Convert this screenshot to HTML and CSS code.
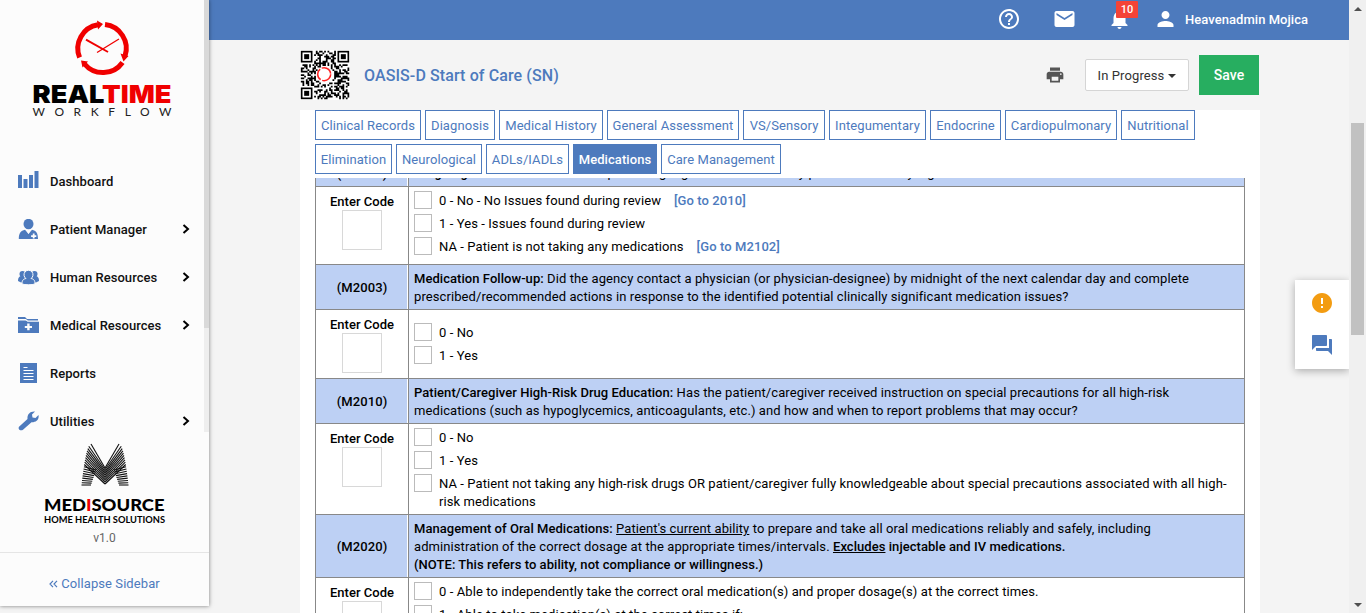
FILE: index.html
```html
<!DOCTYPE html>
<html lang="en">
<head>
<meta charset="utf-8">
<title>OASIS-D Start of Care (SN)</title>
<link rel="stylesheet" href="styles.css">
</head>
<body>
<div class="app">
  <aside class="sidebar">
    <svg class="brand" width="205" height="130" viewBox="0 0 205 130">
      <g fill="none" stroke="#f00000" stroke-width="5">
        <path d="M79.600 57.500A24 24 0 0 1 98 24.800"/>
        <path d="M105 24.500A24 24 0 0 1 125 56"/>
        <path d="M122.500 62.500A24 24 0 0 1 84.500 64"/>
      </g>
      <path fill="#f00000" d="M97 20.500l6 3.500-5 5.500zM120.500 53.500l8 2.500-5 5.500zM81 60.500l7 1-5.500 6z"/>
      <path stroke="#f00000" stroke-width="2" d="M86 39.700l22 12.300"/>
      <path stroke="#f00000" stroke-width="1.300" d="M119 39L97 52.500"/>
      <text class="brand-name" x="32.500" y="103.400" textLength="139" lengthAdjust="spacingAndGlyphs">REAL<tspan fill="#f00000">TIME</tspan></text>
      <text class="brand-sub" x="32.500" y="116" textLength="139">WORKFLOW</text>
    </svg>
    <nav class="menu">
      <a class="item"><svg width="21" height="20" viewBox="0 0 21 20"><path d="M0 4h4v13H0zM5.500 8h4v9h-4zM11 4h4v13h-4zM16.500 0h4v17h-4z"/></svg><span>Dashboard</span></a>
      <a class="item"><svg width="21" height="20" viewBox="0 0 21 20"><ellipse cx="10.500" cy="5" rx="5" ry="5.200"/><path d="M.8 20c0-6 2-8.500 6.200-9.300l3.500 4.300 3.500-4.300c4.200.8 6 3.300 6 9.300z"/><path fill="#fcfcfc" d="M8.500 11l2 4 2-4zM14.800 14.500h1.800v1.700h1.700v1.700h-1.700v1.700h-1.800v-1.700h-1.700v-1.700h1.700z"/></svg><span>Patient Manager</span><i class="chev"><svg width="8" height="10" viewBox="0 0 8 10"><path d="M1.500 1l4.500 4-4.500 4"/></svg></i></a>
      <a class="item"><svg width="21" height="20" viewBox="0 0 21 20"><circle cx="4.500" cy="7" r="3"/><circle cx="16.500" cy="7" r="3"/><path d="M0 14c0-3 1-5 4-5h13c3 0 4 2 4 5l-3 1.500H3z"/><path stroke="#fcfcfc" d="M4 17c0-4 1.500-5 4-5.500a4.500 4.500 0 1 1 5 0c2.500.5 4 1.500 4 5.500-3 1-10 1-13 0z"/></svg><span>Human Resources</span><i class="chev"><svg width="8" height="10" viewBox="0 0 8 10"><path d="M1.500 1l4.500 4-4.500 4"/></svg></i></a>
      <a class="item"><svg width="21" height="20" viewBox="0 0 21 20"><path d="M0 2h7l2 2h11v1.500H0zM0 6h21v12H0z"/><path fill="#fcfcfc" d="M0 4h8l2 2h11v.8H9.500L7.500 4.900H0zM9.200 8.500h2.400v2.400H14v2h-2.400v2.400H9.200v-2.400H6.800v-2h2.400z"/></svg><span>Medical Resources</span><i class="chev"><svg width="8" height="10" viewBox="0 0 8 10"><path d="M1.500 1l4.500 4-4.500 4"/></svg></i></a>
      <a class="item"><svg width="21" height="20" viewBox="0 0 21 20"><path d="M2 0h17v20H2z"/><path stroke="#fff" d="M5.500 4.500h4M5.500 7.500h10M5.500 10.500h10M5.500 13.500h10M5.500 16.500h10"/></svg><span>Reports</span></a>
      <a class="item"><svg width="21" height="20" viewBox="0 0 21 20"><path d="M1 15.700l8.500-7.700C9 3.500 12 0 17 .5l-3 3 .5 3 3 .5 3-3c1 5-3 7.500-7 7.200L5 18.800C2.500 20.500-.5 18 1 15.700z"/></svg><span>Utilities</span><i class="chev"><svg width="8" height="10" viewBox="0 0 8 10"><path d="M1.500 1l4.500 4-4.500 4"/></svg></i></a>
    </nav>
    <div class="side-track"><div class="side-thumb"></div></div>
    <div class="vendor">
      <svg width="209" height="94" viewBox="0 0 209 94">
        <g id="rays" stroke="#111"></g>
        <text class="vendor-name" x="44" y="78.500" textLength="120.500" lengthAdjust="spacingAndGlyphs">MED<tspan fill="#f00000">I</tspan>SOURCE</text>
        <text class="vendor-sub" x="44" y="90.700" textLength="121" lengthAdjust="spacingAndGlyphs">HOME HEALTH SOLUTIONS</text>
      </svg>
      <div class="version">v1.0</div>
    </div>
    <a class="collapse"><svg width="9" height="8" viewBox="0 0 9 8"><path d="M4 .8L1 4l3 3.200M8 .8L5 4l3 3.200"/></svg>Collapse Sidebar</a>
  </aside>

  <main class="main">
    <header class="topbar">
      <svg class="help" width="24" height="24" viewBox="0 0 24 24"><path d="M11 18h2v-2h-2v2zm1-16C6.480 2 2 6.480 2 12s4.480 10 10 10 10-4.480 10-10S17.520 2 12 2zm0 18c-4.410 0-8-3.590-8-8s3.590-8 8-8 8 3.590 8 8-3.590 8-8 8zm0-14c-2.210 0-4 1.790-4 4h2c0-1.100.9-2 2-2s2 .9 2 2c0 2-3 1.750-3 5h2c0-2.250 3-2.500 3-5 0-2.210-1.790-4-4-4z"/></svg>
      <svg class="mail" width="25" height="24" viewBox="0 0 24 24"><path d="M20 4H4c-1.100 0-1.990.9-1.990 2L2 18c0 1.100.9 2 2 2h16c1.100 0 2-.9 2-2V6c0-1.100-.9-2-2-2zm0 4l-8 5-8-5V6l8 5 8-5v2z"/></svg>
      <div class="bell"><svg width="25" height="24" viewBox="0 0 24 24"><path d="M12 22c1.100 0 2-.9 2-2h-4c0 1.100.89 2 2 2zm6-6v-5c0-3.070-1.640-5.640-4.500-6.320V4c0-.83-.67-1.500-1.500-1.500s-1.500.67-1.500 1.500v.68C7.630 5.360 6 7.920 6 11v5l-2 2v1h16v-1l-2-2z"/></svg><b class="badge">10</b></div>
      <svg class="person" width="25" height="24" viewBox="0 0 24 24"><path d="M12 12c2.210 0 4-1.790 4-4s-1.790-4-4-4-4 1.790-4 4 1.790 4 4 4zm0 2c-2.670 0-8 1.340-8 4v2h16v-2c0-2.660-5.330-4-8-4z"/></svg>
      <span class="user">Heavenadmin Mojica</span>
    </header>

    <div class="titlebar">
      <svg id="qr" class="qr" width="50" height="50" viewBox="-.5 -.5 30 30"></svg>
      <h1>OASIS-D Start of Care (SN)</h1>
      <svg class="print" width="20" height="20" viewBox="0 0 24 24"><path d="M19 8H5c-1.660 0-3 1.340-3 3v6h4v4h12v-4h4v-6c0-1.660-1.340-3-3-3zm-3 11H8v-5h8v5zm3-7c-.55 0-1-.45-1-1s.45-1 1-1 1 .45 1 1-.45 1-1 1zm-1-9H6v4h12V3z"/></svg>
      <button class="status">In Progress<i class="caret"></i></button>
      <button class="save">Save</button>
    </div>

    <section class="panel">
      <div class="tabs">
        <a>Clinical Records</a><a>Diagnosis</a><a>Medical History</a><a>General Assessment</a><a>VS/Sensory</a><a>Integumentary</a><a>Endocrine</a><a>Cardiopulmonary</a><a>Nutritional</a>
      </div>
      <div class="tabs second">
        <a>Elimination</a><a>Neurological</a><a>ADLs/IADLs</a><a class="active">Medications</a><a>Care Management</a>
      </div>
      <div class="scroller">
        <div class="form">
          <div class="row head first"><div class="code">(M2001)</div><div class="text"><b>Drug Regimen Review:</b> Did a complete drug regimen review identify potential clinically significant medication issues?</div></div>
          <div class="row r1"><div class="entry">Enter Code<i class="box"></i></div><div class="opts">
            <label><i></i><span>0 - No - No Issues found during review<b class="go">[Go to 2010]</b></span></label>
            <label><i></i><span>1 - Yes - Issues found during review</span></label>
            <label><i></i><span>NA - Patient is not taking any medications<b class="go">[Go to M2102]</b></span></label></div></div>
          <div class="row head"><div class="code">(M2003)</div><div class="text"><b>Medication Follow-up:</b> Did the agency contact a physician (or physician-designee) by midnight of the next calendar day and complete<br>prescribed/recommended actions in response to the identified potential clinically significant medication issues?</div></div>
          <div class="row r2"><div class="entry">Enter Code<i class="box"></i></div><div class="opts">
            <label><i></i><span>0 - No</span></label><label><i></i><span>1 - Yes</span></label></div></div>
          <div class="row head"><div class="code">(M2010)</div><div class="text"><b>Patient/Caregiver High-Risk Drug Education:</b> Has the patient/caregiver received instruction on special precautions for all high-risk<br>medications (such as hypoglycemics, anticoagulants, etc.) and how and when to report problems that may occur?</div></div>
          <div class="row r3"><div class="entry">Enter Code<i class="box"></i></div><div class="opts">
            <label><i></i><span>0 - No</span></label><label><i></i><span>1 - Yes</span></label>
            <label><i></i><span>NA - Patient not taking any high-risk drugs OR patient/caregiver fully knowledgeable about special precautions associated with all high-<br>risk medications</span></label></div></div>
          <div class="row head"><div class="code">(M2020)</div><div class="text"><b>Management of Oral Medications:</b> <u>Patient's current ability</u> to prepare and take all oral medications reliably and safely, including<br>administration of the correct dosage at the appropriate times/intervals. <b><u>Excludes</u> injectable and IV medications.<br>(NOTE: This refers to ability, not compliance or willingness.)</b></div></div>
          <div class="row r4"><div class="entry">Enter Code<i class="box"></i></div><div class="opts">
            <label><i></i><span>0 - Able to independently take the correct oral medication(s) and proper dosage(s) at the correct times.</span></label>
            <label><i></i><span>1 - Able to take medication(s) at the correct times if:</span></label></div></div>
        </div>
      </div>
    </section>
    <div class="float">
      <svg width="24" height="24" viewBox="0 0 24 24"><path fill="#f39c12" d="M12 2C6.480 2 2 6.480 2 12s4.480 10 10 10 10-4.480 10-10S17.520 2 12 2zm1 15h-2v-2h2v2zm0-4h-2V7h2v6z"/></svg>
      <svg width="24" height="24" viewBox="0 0 24 24"><path fill="#4d7abd" d="M21 6h-2v9H6v2c0 .55.45 1 1 1h11l4 4V7c0-.55-.45-1-1-1zm-4 6V3c0-.55-.45-1-1-1H3c-.55 0-1 .45-1 1v14l4-4h10c.55 0 1-.45 1-1z"/></svg>
    </div>
  </main>
  <div class="scrollbar"><i class="up"></i><i class="thumb"></i><i class="down"></i></div>
</div>
<script src="app.js"></script>
</body>
</html>
```

FILE: styles.css
```css
* { box-sizing: border-box; }
body { margin: 0; background: #f4f4f4; font: 13px/18px Roboto, "Liberation Sans", sans-serif; color: #000; overflow: hidden; }
i { font-style: normal; display: block; }
b { font-weight: 500; }
.app { display: flex; height: 613px; position: relative; overflow: hidden; }

.sidebar { position: relative; z-index: 2; width: 209px; height: 606px; flex: none; background: #fcfcfc; box-shadow: 0 0 4px rgba(0,0,0,.5); display: flex; flex-direction: column; }
.brand { display: block; flex: none; }
.brand-name { font: 900 25px Inter, sans-serif; }
.brand-sub { font: 400 12px Lato, sans-serif; fill: #222; }
.menu { padding-top: 27px; height: 302px; flex: none; overflow: hidden; }
.item { display: flex; align-items: center; height: 48px; padding: 0 19px 0 18px; font-weight: 500; letter-spacing: .04px; color: #111; }
.item span { padding-top: 2px; }
.item > svg { fill: #4d7abd; margin-right: 11px; flex: none; }
.chev { margin-left: auto; width: 8px; height: 10px; }
.chev svg { display: block; fill: none; stroke: #000; stroke-width: 2; }
.side-track { position: absolute; right: 0; top: 0; width: 5px; height: 432px; background: #eee; }
.side-thumb { height: 328px; background: #d9d9d9; }
.vendor { height: 121px; flex: none; border-bottom: 1px solid #e5e5e5; text-align: center; }
.vendor svg { display: block; }
.vendor-name { font: 900 17.500px Lato, sans-serif; }
.vendor-sub { font: 700 9.800px Lato, sans-serif; }
.version { font-size: 12px; line-height: 14px; margin-top: 5px; color: #666; }
.collapse { height: 54px; padding-top: 8px; display: flex; align-items: center; justify-content: center; gap: 3px; color: #4d7abd; letter-spacing: .08px; }
.collapse svg { fill: none; stroke: #4d7abd; stroke-width: 1.2; }

.main { width: 1140px; flex: none; position: relative; }
.topbar { height: 40px; background: #4d7abd; display: flex; align-items: center; padding: 0 41px 2px 0; justify-content: flex-end; color: #fff; }
.topbar svg { fill: #fff; display: block; }
.mail { margin-left: 31px; }
.bell { margin-left: 30px; position: relative; }
.badge { position: absolute; left: 9px; top: -6px; width: 22px; height: 17px; background: #f44336; font-size: 11px; line-height: 17px; text-align: center; border-radius: 1px; }
.person { margin-left: 21px; }
.user { margin-left: 7px; padding-top: 2px; font-weight: 500; width: 123px; white-space: nowrap; letter-spacing: .05px; }

.titlebar { width: 960px; height: 70px; margin-left: 91px; display: flex; align-items: center; padding-right: 1px; }
.qr { background: #fff; }
h1 { margin: 0 auto 0 14px; padding-top: 2px; font-size: 16px; font-weight: 500; letter-spacing: .1px; color: #4d7abd; }
.print { fill: #555; margin-right: 20px; }
button { font: inherit; padding: 0; }
.status { width: 104px; height: 32px; padding-top: 1px; border: 1px solid #d5d5d5; background: #fff; border-radius: 2px; color: #333; display: flex; align-items: center; justify-content: center; gap: 4px; letter-spacing: .1px; }
.caret { border: 4px solid transparent; border-top-color: #333; border-bottom: 0; }
.save { width: 60px; height: 40px; margin-left: 10px; border: 0; background: #27ae60; color: #fff; font-size: 14px; font-weight: 500; }

.panel { width: 960px; height: 503px; margin-left: 91px; background: #fff; padding: 0 15px; }
.tabs { display: grid; grid-template-columns: 106px 70px 104px 132px 82px 97px 71px 112px 74px; gap: 4px; height: 34px; }
.second { grid-template-columns: 77px 86px 83px 84px 120px; }
.tabs a { height: 30px; border: 1px solid #4d7abd; color: #4d7abd; text-align: center; white-space: nowrap; line-height: 29px; letter-spacing: .08px; }
.tabs .active { background: #4d7abd; color: #fff; font-weight: 500; }
.scroller { height: 435px; overflow: hidden; }
.form { margin-top: -20px; width: 930px; border: 1px solid #888; letter-spacing: .085px; }
.row { display: grid; grid-template-columns: 93px 1fr; border-bottom: 1px solid #888; }
.head { background: #bdd0f4; }
.head b { letter-spacing: .05px; }
.first { height: 28px; }
.code { display: flex; align-items: center; justify-content: center; padding-top: 2px; font-weight: 500; border-right: 1px solid #888; box-shadow: inset -1px 0 #fff; }
.text { padding: 5px 5px 3px; white-space: nowrap; }
.entry { font-weight: 500; text-align: center; padding-top: 5px; line-height: 20px; letter-spacing: .03px; border-right: 1px solid #888; }
.box { width: 40px; height: 40px; margin: -2px auto 0; border: 1px solid #d8d8d8; }
.opts { padding: 4px 5px; }
.opts label { display: flex; gap: 7px; margin-bottom: 5px; white-space: nowrap; }
.opts label i { width: 18px; height: 18px; border: 1px solid #bbb; flex: none; }
.opts label span { padding-top: 1px; margin-bottom: -1px; }
.go { color: #4d7abd; margin-left: 13px; }
.r1 { height: 78px; }
.r2 { height: 69px; }
.r2 .opts { padding-top: 13px; }
.r3 { height: 91px; }
.r4 { height: 100px; }

.float { position: absolute; right: 0; top: 280px; width: 54px; height: 89px; background: #fff; box-shadow: 0 2px 8px rgba(0,0,0,.3); display: flex; flex-direction: column; align-items: center; gap: 18px; padding-top: 11px; clip-path: inset(-12px 0 -12px -12px); }

.scrollbar { width: 17px; flex: none; background: #f0f0f0; display: flex; flex-direction: column; align-items: center; padding: 7px 0 6px; }
.up { border: 4px solid transparent; border-top: 0; border-bottom-color: #505050; }
.down { border: 4px solid transparent; border-bottom: 0; border-top-color: #505050; margin-top: auto; }
.thumb { width: 13px; height: 212px; margin-top: 112px; background: #c1c1c1; }
```

FILE: app.js
```js
const NS = 'http://www.w3.org/2000/svg';
function add(parent, tag, attrs) {
  const el = document.createElementNS(NS, tag);
  for (const k in attrs) el.setAttribute(k, attrs[k]);
  parent.appendChild(el);
}

// QR code: data modules, three finder squares, centre emblem
const qr = document.getElementById('qr');
let seed = 71, d = '';
for (let y = 0; y < 29; y++) {
  for (let x = 0; x < 29; x++) {
    seed = (seed * 16807) % 2147483647;
    const finder = (x < 8 && (y < 8 || y > 20)) || (x > 20 && y < 8);
    const centre = Math.hypot(x - 14, y - 14) < 5.5;
    if (!finder && !centre && seed % 100 < 54) d += `M${x} ${y}h1.050v1.050h-1.050z`;
  }
}
add(qr, 'path', { d });
for (const [x, y] of [[0, 0], [22, 0], [0, 22]]) {
  add(qr, 'rect', { x: x + .5, y: y + .5, width: 6, height: 6, fill: 'none', stroke: '#000' });
  add(qr, 'rect', { x: x + 2, y: y + 2, width: 3, height: 3 });
}
add(qr, 'circle', { cx: 14, cy: 14, r: 3.9, fill: 'none', stroke: '#f22', 'stroke-width': .9, 'stroke-dasharray': '7.200 .97' });

// Vendor emblem: strokes from each outer edge, the upper ones meeting in the
// middle and the lower ones stopping at the inside of the leg
const rays = document.getElementById('rays');
const count = 19;
for (let i = 0; i < count; i++) {
  const t = i / (count - 1);
  const outerX = 14 + Math.sqrt(t) * 9.5;
  const outerY = 12 + t * 41;
  const upper = i < 10;
  const k = upper ? i / 9 : (i - 10) / 8;
  const innerX = upper ? 0 : 9 + k * 5;
  const innerY = upper ? 36 + k * 16 : 38 + k * 15;
  for (const s of [-1, 1]) {
    add(rays, 'line', { x1: 105 + s * outerX, y1: outerY, x2: 105 + s * innerX, y2: innerY, 'stroke-width': 1.1 });
  }
}
```
